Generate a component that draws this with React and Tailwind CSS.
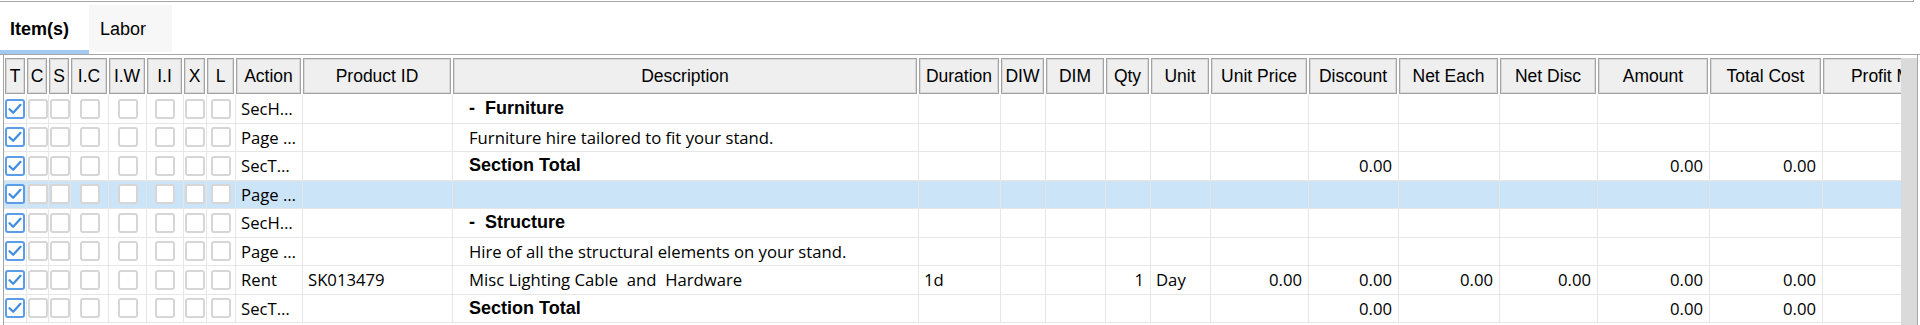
import React from 'react';

const COLS = [
  { key: 't', label: 'T', w: 'w-[22px]', box: true },
  { key: 'c', label: 'C', w: 'w-[22px]', box: true },
  { key: 's', label: 'S', w: 'w-[22px]', box: true },
  { key: 'ic', label: 'I.C', w: 'w-[38px]', box: true },
  { key: 'iw', label: 'I.W', w: 'w-[38px]', box: true },
  { key: 'ii', label: 'I.I', w: 'w-[37px]', box: true },
  { key: 'x', label: 'X', w: 'w-[23px]', box: true },
  { key: 'l', label: 'L', w: 'w-[29px]', box: true },
  { key: 'action', label: 'Action', w: 'w-[67px]' },
  { key: 'pid', label: 'Product ID', w: 'w-[150px]' },
  { key: 'desc', label: 'Description', w: 'w-[466px]' },
  { key: 'dur', label: 'Duration', w: 'w-[82px]' },
  { key: 'diw', label: 'DIW', w: 'w-[45px]' },
  { key: 'dim', label: 'DIM', w: 'w-[60px]' },
  { key: 'qty', label: 'Qty', w: 'w-[45px]', right: true },
  { key: 'unit', label: 'Unit', w: 'w-[60px]' },
  { key: 'up', label: 'Unit Price', w: 'w-[98px]', right: true },
  { key: 'disc', label: 'Discount', w: 'w-[90px]', right: true },
  { key: 'ne', label: 'Net Each', w: 'w-[101px]', right: true },
  { key: 'nd', label: 'Net Disc', w: 'w-[98px]', right: true },
  { key: 'amt', label: 'Amount', w: 'w-[112px]', right: true },
  { key: 'tc', label: 'Total Cost', w: 'w-[113px]', right: true },
  { key: 'pm', label: 'Profit Margin', w: 'w-[157px]', right: true },
];

const ROWS = [
  { action: 'SecH…', desc: '-  Furniture', bold: true },
  { action: 'Page …', desc: 'Furniture hire tailored to fit your stand.' },
  { action: 'SecT…', desc: 'Section Total', bold: true, disc: '0.00', amt: '0.00', tc: '0.00' },
  { action: 'Page …', sel: true },
  { action: 'SecH…', desc: '-  Structure', bold: true },
  { action: 'Page …', desc: 'Hire of all the structural elements on your stand.' },
  {
    action: 'Rent', pid: 'SK013479', desc: 'Misc Lighting Cable  and  Hardware',
    dur: '1d', qty: '1', unit: 'Day', up: '0.00', disc: '0.00', ne: '0.00', nd: '0.00', amt: '0.00', tc: '0.00',
  },
  { action: 'SecT…', desc: 'Section Total', bold: true, disc: '0.00', amt: '0.00', tc: '0.00' },
];

function CheckBox({ checked }) {
  if (checked) {
    return (
      <div className="w-[20px] h-[20px] shrink-0 rounded-[3px] border-2 border-[#5b9de6] bg-white flex items-center justify-center">
        <svg width="16" height="16" viewBox="0 0 16 16" fill="none">
          <path d="M2.5 8.2 L6.2 11.8 L13.5 3.8" stroke="#3f8ce0" strokeWidth="2.2" strokeLinecap="round" strokeLinejoin="round" />
        </svg>
      </div>
    );
  }
  return <div className="w-[20px] h-[20px] shrink-0 rounded-[3px] border-2 border-[#d6d6d6] bg-white" />;
}

function BodyCell({ col, row, first }) {
  const base = `${col.w} shrink-0 h-full flex items-center overflow-hidden ${first ? '' : 'border-l border-[#e6e6e6]'}`;

  if (col.box) {
    return (
      <div className={`${base} justify-center`}>
        <CheckBox checked={col.key === 't'} />
      </div>
    );
  }

  const value = row[col.key];
  if (col.key === 'desc' && row.bold) {
    return (
      <div className={`${base} pl-[16px] whitespace-pre font-['Liberation_Sans',Arial,sans-serif] font-bold text-[18px] text-black`}>
        {value}
      </div>
    );
  }

  return (
    <div
      className={`${base} whitespace-pre text-black ${col.right ? 'justify-end pr-[6px]' : col.key === 'desc' ? 'pl-[16px]' : 'pl-[5px]'}`}
    >
      {value}
    </div>
  );
}

export default function App() {
  return (
    <div className="w-[1920px] h-[325px] bg-white overflow-hidden font-['Liberation_Sans',Arial,sans-serif]">
      {/* top frame edge */}
      <div className="h-[2px] w-[1914px] border-b border-r border-[#a6a6a6]" />

      {/* tabs */}
      <div className="h-[53px] flex items-start pt-[3px] border-b border-[#a6a6a6]">
        <div className="relative w-[89px] h-[49px] bg-white flex items-center pl-[10px] text-[18px] font-bold text-black">
          Item(s)
          <div className="absolute left-0 right-0 bottom-0 h-[4px] bg-[#a3c9f1]" />
        </div>
        <div className="w-[83px] h-[47px] bg-[#f7f7f7] flex items-center pl-[11px] pt-[2px] text-[18px] text-black">
          Labor
        </div>
      </div>

      {/* grid */}
      <div className="ml-[3px] w-[1915px] h-[270px] flex border-l border-r border-[#a6a6a6]">
        <div className="flex-1 overflow-hidden">
          {/* header */}
          <div className="h-[40px] pt-[3px] flex">
            {COLS.map((col) => (
              <div key={col.key} className={`${col.w} shrink-0 px-[1px]`}>
                <div className="h-[36px] border border-[#a3a3a3] shadow-[inset_0_0_0_1px_#d9d9d9] bg-[#efefef] flex items-center justify-center whitespace-nowrap overflow-hidden text-[17.5px] text-black">
                  {col.label}
                </div>
              </div>
            ))}
          </div>

          {/* body */}
          <div className="font-['Open_Sans','Noto_Sans',sans-serif] text-[16.7px]">
            {ROWS.map((row, i) => (
              <div
                key={i}
                className={`h-[28.5px] flex border-b border-[#e6e6e6] ${row.sel ? 'bg-[#cce4f8]' : 'bg-white'}`}
              >
                {COLS.map((col, j) => (
                  <BodyCell key={col.key} col={col} row={row} first={j === 0} />
                ))}
              </div>
            ))}
          </div>
        </div>

        {/* vertical scrollbar */}
        <div className="w-[16px] shrink-0 mt-[3px] bg-[#dadada]" />
      </div>
    </div>
  );
}
